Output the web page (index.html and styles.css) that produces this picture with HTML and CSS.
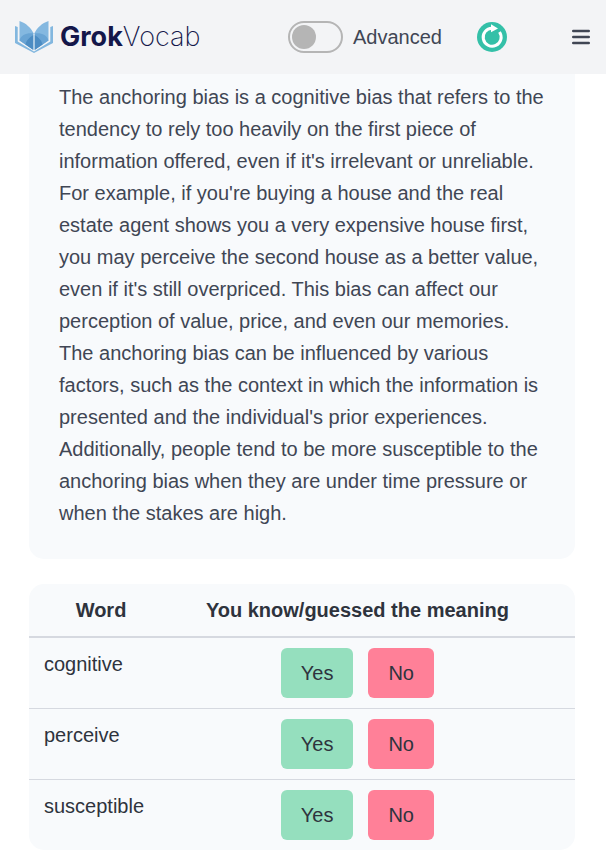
FILE: index.html
```
<!DOCTYPE html>
<html lang="en">
<head>
    <meta charset="UTF-8">
    <meta name="viewport" content="width=device-width, initial-scale=1.0">
    <title>GrokVocab</title>
    <link rel="stylesheet" href="styles.css">
</head>
<body>
    <nav class="navbar">
        <a class="brand" href="#">
            <svg class="brand-icon" viewBox="0 0 38 32" width="38" height="32" aria-hidden="true">
                <path fill="#82b7df" d="M0 5l2.700 1v14.500L19 30.500 35.300 20.500V6L38 5v17L19 32 0 22z"/>
                <path fill="#84b8e0" d="M4.500 0C11 2 16 7 18.500 12v17L4.500 19.500zM33.500 0C27 2 22 7 19.500 12v17l14-9.500z"/>
                <path fill="#69a4d4" d="M4.500 19.500C6 14 12 11.500 18.500 12.500V29zM33.500 19.500C32 14 26 11.500 19.500 12.500V29z"/>
                <path fill="#4b8cc3" d="M18.500 14C14 16.500 11 20 10.500 23.500L18.500 29zM19.500 14c4.500 2.500 7.500 6 8 9.500l-8 5.500z"/>
                <path fill="none" stroke="#e6f0f7" d="M19 13v17"/>
            </svg>
            <span class="brand-name"><b>Grok</b>Vocab</span>
        </a>
        <label class="level">
            <input class="switch" type="checkbox">
            Advanced
        </label>
        <button class="refresh" type="button" aria-label="Refresh">
            <svg viewBox="0 0 30 30" width="30" height="30" aria-hidden="true">
                <circle cx="15" cy="15" r="15" fill="#34c0a8"/>
                <path d="M22.500 10A9 9 0 1 1 15 6.200" fill="none" stroke="#fff" stroke-width="3"/>
                <path d="M14 2.200l7 4.200-7 3.800z" fill="#fff"/>
            </svg>
        </button>
        <button class="burger" type="button" aria-label="Menu">
            <svg viewBox="0 0 18 16" width="18" height="16" aria-hidden="true">
                <path d="M1.200 2h15.600M1.200 8h15.600M1.200 14h15.600" stroke="#404654" stroke-width="2.400" stroke-linecap="round"/>
            </svg>
        </button>
    </nav>

    <main class="content">
        <p class="card story">The anchoring bias is a cognitive bias that refers to the tendency to rely too heavily on the first piece of information offered, even if it's irrelevant or unreliable. For example, if you're buying a house and the real estate agent shows you a very expensive house first, you may perceive the second house as a better value, even if it's still overpriced. This bias can affect our perception of value, price, and even our memories. The anchoring bias can be influenced by various factors, such as the context in which the information is presented and the individual's prior experiences. Additionally, people tend to be more susceptible to the anchoring bias when they are under time pressure or when the stakes are high.</p>

        <table class="card words">
            <thead>
                <tr>
                    <th>Word</th>
                    <th>You know/guessed the meaning</th>
                    <th></th>
                </tr>
            </thead>
            <tbody>
                <tr>
                    <td>cognitive</td>
                    <td>
                        <div class="answers">
                            <button class="btn yes" type="button">Yes</button>
                            <button class="btn no" type="button">No</button>
                        </div>
                    </td>
                    <td></td>
                </tr>
                <tr>
                    <td>perceive</td>
                    <td>
                        <div class="answers">
                            <button class="btn yes" type="button">Yes</button>
                            <button class="btn no" type="button">No</button>
                        </div>
                    </td>
                    <td></td>
                </tr>
                <tr>
                    <td>susceptible</td>
                    <td>
                        <div class="answers">
                            <button class="btn yes" type="button">Yes</button>
                            <button class="btn no" type="button">No</button>
                        </div>
                    </td>
                    <td></td>
                </tr>
            </tbody>
        </table>
    </main>
</body>
</html>
```
FILE: styles.css
```
* {
    box-sizing: border-box;
}

body {
    margin: 0;
    background: #fff;
    color: #404654;
    font-family: "Liberation Sans", Arial, sans-serif;
    font-size: 20px;
    line-height: 32px;
}

button {
    padding: 0;
    border: 0;
    background: none;
    color: inherit;
    font: inherit;
    cursor: pointer;
}

svg {
    display: block;
}

/* Navbar stays on top while the story scrolls under it */
.navbar {
    position: fixed;
    top: 0;
    left: 0;
    right: 0;
    z-index: 10;
    display: flex;
    align-items: center;
    height: 74px;
    padding-left: 15px;
    background: #f3f4f6;
}

.brand {
    display: flex;
    align-items: center;
    gap: 7px;
    width: 273px;
    color: #14174a;
    text-decoration: none;
}

.brand-name {
    font-family: Inter, sans-serif;
    font-size: 27px;
    font-weight: 200;
}

.brand-name b {
    font-weight: 700;
}

.level {
    display: flex;
    align-items: center;
    gap: 10px;
    margin-right: 35px;
}

.switch {
    appearance: none;
    display: flex;
    width: 55px;
    height: 32px;
    margin: 0;
    padding: 2px;
    border: 2px solid #b5b5b5;
    border-radius: 16px;
    cursor: pointer;
}

.switch::before {
    content: "";
    width: 24px;
    height: 24px;
    border-radius: 50%;
    background: #b5b5b5;
}

.switch:checked {
    justify-content: flex-end;
}

.burger {
    display: flex;
    align-items: center;
    justify-content: center;
    width: 50px;
    height: 50px;
    margin-left: auto;
}

.content {
    padding: 51px 31px 5px 29px;
}

.card {
    margin: 0 0 25px;
    border-radius: 15px;
    background: #f8fafc;
}

.story {
    padding: 30px;
}

.words {
    width: 100%;
    margin-bottom: 0;
    border-spacing: 0;
    color: #2e333d;
}

.words th,
.words td {
    padding: 10px 15px;
    border-bottom: 1px solid #d6d9e0;
    vertical-align: top;
}

.words th {
    border-bottom-width: 2px;
}

.words tr:last-child td {
    border-bottom: 0;
}

.answers {
    display: flex;
    justify-content: center;
    gap: 15px;
}

.btn {
    height: 50px;
    padding: 0 20px;
    border-radius: 6px;
}

.yes {
    background: #95dfbe;
}

.no {
    background: #ff8098;
}
```
